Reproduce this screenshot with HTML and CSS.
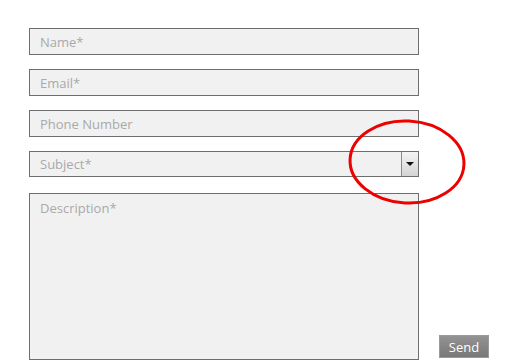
FILE: index.html
```html
<!DOCTYPE html>
<html>
<head>
<meta charset="utf-8">
<link rel="stylesheet" href="styles.css">
</head>
<body>
<form class="form">
  <input class="field" type="text" placeholder="Name*">
  <input class="field" type="text" placeholder="Email*">
  <input class="field" type="text" placeholder="Phone Number">
  <div class="select">
    <span class="select-text">Subject*</span>
    <span class="select-btn"><span class="arrow"></span></span>
  </div>
  <div class="bottom-row">
    <textarea class="area" placeholder="Description*"></textarea>
    <button class="send" type="button">Send</button>
  </div>
</form>
<svg class="circle" width="130" height="100" viewBox="0 0 130 100">
  <ellipse cx="64" cy="50" rx="57" ry="41" transform="rotate(3 64 50)" fill="none" stroke="#ec0000" stroke-width="3"/>
</svg>
</body>
</html>
```
FILE: styles.css
```css
html, body {
  margin: 0;
  padding: 0;
  background: #ffffff;
  overflow: hidden;
}
body {
  width: 520px;
  height: 360px;
  position: relative;
  font-family: "Open Sans", "DejaVu Sans", sans-serif;
}
.form {
  display: flex;
  flex-direction: column;
  gap: 14px;
  padding: 28px 0 0 29px;
}
.field, .select, .area {
  box-sizing: border-box;
  width: 390px;
  margin: 0;
  background: #f1f1f1;
  border: 1px solid #6e6e6e;
  font-family: inherit;
  font-size: 13px;
  color: #444;
  outline: none;
}
.field {
  height: 27px;
  padding: 0 10px;
}
.field::placeholder, .area::placeholder {
  color: #a9a9a9;
}
.select {
  height: 26px;
  display: flex;
  align-items: stretch;
  justify-content: space-between;
}
.select-text {
  padding-left: 10px;
  line-height: 24px;
  color: #a9a9a9;
}
.select-btn {
  width: 16px;
  border-left: 1px solid #8a8a8a;
  background: linear-gradient(#f4f4f4, #d4d4d4);
  display: flex;
  align-items: center;
  justify-content: center;
}
.arrow {
  width: 0;
  height: 0;
  border-left: 4px solid transparent;
  border-right: 4px solid transparent;
  border-top: 4px solid #111;
}
.bottom-row {
  display: flex;
  align-items: flex-end;
  gap: 20px;
  margin-top: 2px;
}
.area {
  height: 167px;
  padding: 5px 10px;
  resize: none;
  display: block;
}
.send {
  width: 50px;
  height: 23px;
  margin-bottom: 2px;
  border: 1px solid #9a9a9a;
  background: linear-gradient(#939393, #787878);
  color: #ffffff;
  font-family: inherit;
  font-size: 13px;
  padding: 0;
}
.circle {
  position: absolute;
  left: 343px;
  top: 112px;
}
```
